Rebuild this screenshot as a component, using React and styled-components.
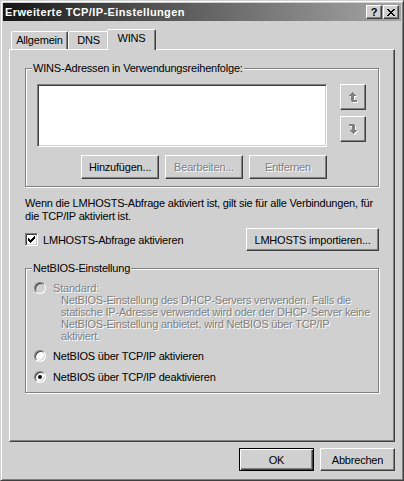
import React from 'react';
import styled, { createGlobalStyle, css } from 'styled-components';

const FACE = '#d0d0d0';
const SHADOW = '#808080';
const DARK = '#404040';

const GlobalStyle = createGlobalStyle`
  body {
    margin: 0;
    background: ${FACE};
    font-family: "Liberation Sans", Arial, sans-serif;
    font-size: 11px;
    letter-spacing: -0.2px;
    color: #000;
  }
`;

const Window = styled.div`
  box-sizing: border-box;
  width: 404px;
  height: 481px;
  background: ${FACE};
  border: 1px solid;
  border-color: ${FACE} ${DARK} ${DARK} ${FACE};
  box-shadow: inset 1px 1px #fff, inset -1px -1px ${SHADOW};
  padding: 2px;
  display: flex;
  flex-direction: column;
`;

const TitleBar = styled.div`
  height: 18px;
  display: flex;
  align-items: center;
  padding: 0 2px;
  background: linear-gradient(90deg, #141414 0%, #3a3a3a 20%, #a6a6a6 100%);
`;

const Title = styled.div`
  flex: 1;
  color: #fff;
  font-weight: bold;
  letter-spacing: 0.4px;
  white-space: nowrap;
`;

const CaptionButton = styled.div`
  box-sizing: border-box;
  width: 16px;
  height: 14px;
  margin-left: ${p => p.$gap || 0}px;
  background: ${FACE};
  border: 1px solid;
  border-color: #fff ${DARK} ${DARK} #fff;
  box-shadow: inset -1px -1px ${SHADOW};
  display: flex;
  align-items: center;
  justify-content: center;
  font-weight: bold;
  font-size: 11px;
  letter-spacing: 0;
  line-height: 12px;
`;

const Body = styled.div`
  flex: 1;
  display: flex;
  flex-direction: column;
  padding: 8px 6px 0 6px;
`;

const TabStrip = styled.div`
  height: 20px;
  display: flex;
  align-items: flex-end;
  padding-left: 2px;
`;

const Tab = styled.div`
  box-sizing: border-box;
  position: relative;
  z-index: ${p => (p.$active ? 1 : 0)};
  width: ${p => p.$w}px;
  height: ${p => (p.$active ? 21 : 18)}px;
  margin: ${p => (p.$active ? '0 -2px -1px' : '0')};
  background: ${FACE};
  border: 1px solid;
  border-bottom: none;
  border-color: #fff ${DARK} transparent #fff;
  border-radius: 2px 2px 0 0;
  box-shadow: inset -1px 0 ${SHADOW};
  line-height: 16px;
  text-align: center;
  white-space: nowrap;
`;

const Panel = styled.div`
  box-sizing: border-box;
  height: 393px;
  border: 1px solid;
  border-color: #fff ${DARK} ${DARK} #fff;
  box-shadow: inset -1px -1px ${SHADOW};
  padding: 12px 15px 0 15px;
  display: flex;
  flex-direction: column;
`;

const Group = styled.fieldset`
  margin: ${p => p.$top || 0}px 0 0 0;
  padding: 0;
  min-width: 0;
  border: 1px solid ${SHADOW};
  box-shadow: inset 1px 1px #fff, 1px 1px #fff;
`;

const Legend = styled.legend`
  margin-left: 6px;
  padding: 0 1px;
  line-height: 13px;
  background: ${FACE};
`;

const WinsBody = styled.div`
  display: flex;
  gap: 13px;
  padding: 9px 0 7px 11px;
`;

const ListColumn = styled.div`
  display: flex;
  flex-direction: column;
`;

const ListBox = styled.div`
  box-sizing: border-box;
  width: 290px;
  height: 63px;
  background: #fff;
  border: 1px solid;
  border-color: ${SHADOW} #fff #fff ${SHADOW};
  box-shadow: inset 1px 1px ${DARK}, inset -1px -1px ${FACE};
`;

const ButtonRow = styled.div`
  display: flex;
  justify-content: flex-end;
  gap: 6px;
  margin-top: 8px;
`;

const ArrowColumn = styled.div`
  display: flex;
  flex-direction: column;
  gap: 6px;
`;

const Button = styled.button`
  box-sizing: border-box;
  width: ${p => p.$w || 75}px;
  height: ${p => p.$h || 23}px;
  padding: 0;
  margin: 0;
  font-family: inherit;
  font-size: 11px;
  letter-spacing: -0.2px;
  background: ${FACE};
  color: ${p => (p.disabled ? SHADOW : '#000')};
  text-shadow: ${p => (p.disabled ? '1px 1px 0 #fff' : 'none')};
  border: 1px solid;
  border-color: #fff ${DARK} ${DARK} #fff;
  box-shadow: inset -1px -1px ${SHADOW};
  display: flex;
  align-items: center;
  justify-content: center;
  ${p =>
    p.$default &&
    css`
      border-color: #000;
      box-shadow: inset 1px 1px #fff, inset -1px -1px ${DARK}, inset -2px -2px ${SHADOW};
    `}
`;

const Note = styled.p`
  margin: 10px 0 0 0;
  line-height: 13px;
`;

const CheckRow = styled.div`
  display: flex;
  align-items: center;
  margin-top: 5px;
`;

const CheckLabel = styled.label`
  flex: 1;
  display: flex;
  align-items: center;
  gap: 5px;
`;

const CheckBox = styled.span`
  box-sizing: border-box;
  width: 13px;
  height: 13px;
  background: #fff;
  border: 1px solid;
  border-color: ${SHADOW} #fff #fff ${SHADOW};
  box-shadow: inset 1px 1px ${DARK}, inset -1px -1px ${FACE};
  display: flex;
  padding: 2px 0 0 2px;
`;

const NetBody = styled.div`
  display: flex;
  flex-direction: column;
  padding: 6px 0 9px 8px;
`;

const RadioRow = styled.label`
  display: flex;
  align-items: center;
  gap: 7px;
  height: 13px;
  margin-top: ${p => p.$top || 0}px;
  color: ${p => (p.$disabled ? SHADOW : '#000')};
  text-shadow: ${p => (p.$disabled ? '1px 1px 0 #fff' : 'none')};
`;

const Radio = styled.span`
  box-sizing: border-box;
  width: 12px;
  height: 12px;
  border-radius: 50%;
  background: ${p => (p.$disabled ? FACE : '#fff')};
  border: 1px solid;
  border-color: ${SHADOW} #fff #fff ${SHADOW};
  box-shadow: inset 1px 1px ${DARK}, inset -1px -1px ${FACE};
  display: flex;
  align-items: center;
  justify-content: center;
  flex: none;

  &::after {
    content: '';
    display: ${p => (p.$checked ? 'block' : 'none')};
    width: 4px;
    height: 4px;
    border-radius: 50%;
    background: #000;
  }
`;

const Description = styled.div`
  padding-left: 27px;
  line-height: 12px;
  color: ${SHADOW};
  text-shadow: 1px 1px 0 #fff;
`;

const Footer = styled.div`
  display: flex;
  justify-content: flex-end;
  gap: 6px;
  margin-top: 6px;
`;

const pixels = (rows, color, dx = 0, dy = 0) =>
  rows.flatMap(([y, segs]) =>
    segs.map(([x, w]) => (
      <rect key={`${color}-${y}-${x}`} x={x + dx} y={y + dy} width={w} height={1} fill={color} />
    ))
  );

const checkRows = [
  [0, [[6, 1]]],
  [1, [[5, 2]]],
  [2, [[0, 1], [4, 3]]],
  [3, [[0, 2], [3, 3]]],
  [4, [[0, 5]]],
  [5, [[1, 3]]],
  [6, [[2, 1]]],
];

const arrowRows = [
  [0, [[3, 1]]],
  [1, [[2, 3]]],
  [2, [[1, 5]]],
  [3, [[0, 7]]],
  [4, [[2, 3]]],
  [5, [[2, 3]]],
  [6, [[2, 3]]],
  [7, [[2, 3]]],
  [8, [[2, 6]]],
  [9, [[3, 5]]],
];

const closeRows = [
  [0, [[0, 2], [6, 2]]],
  [1, [[1, 2], [5, 2]]],
  [2, [[2, 4]]],
  [3, [[3, 2]]],
  [4, [[2, 4]]],
  [5, [[1, 2], [5, 2]]],
  [6, [[0, 2], [6, 2]]],
];

function CheckMark() {
  return (
    <svg width="7" height="7" viewBox="0 0 7 7" shapeRendering="crispEdges">
      {pixels(checkRows, '#000')}
    </svg>
  );
}

function CloseGlyph() {
  return (
    <svg width="8" height="7" viewBox="0 0 8 7" shapeRendering="crispEdges">
      {pixels(closeRows, '#000')}
    </svg>
  );
}

function MoveArrow({ down }) {
  return (
    <svg
      width="9"
      height="11"
      viewBox="0 0 9 11"
      shapeRendering="crispEdges"
      style={down ? { transform: 'rotate(180deg)' } : undefined}
    >
      {down ? (
        <>
          {pixels(arrowRows, '#fff', 0, 0)}
          {pixels(arrowRows, SHADOW, 1, 1)}
        </>
      ) : (
        <>
          {pixels(arrowRows, '#fff', 1, 1)}
          {pixels(arrowRows, SHADOW, 0, 0)}
        </>
      )}
    </svg>
  );
}

export default function App() {
  return (
    <>
      <GlobalStyle />
      <Window>
        <TitleBar>
          <Title>Erweiterte TCP/IP-Einstellungen</Title>
          <CaptionButton>?</CaptionButton>
          <CaptionButton $gap={1}>
            <CloseGlyph />
          </CaptionButton>
        </TitleBar>
        <Body>
          <TabStrip>
            <Tab $w={57}>Allgemein</Tab>
            <Tab $w={41}>DNS</Tab>
            <Tab $w={49} $active>
              WINS
            </Tab>
          </TabStrip>
          <Panel>
            <Group>
              <Legend>WINS-Adressen in Verwendungsreihenfolge:</Legend>
              <WinsBody>
                <ListColumn>
                  <ListBox />
                  <ButtonRow>
                    <Button $w={78} $h={24}>Hinzufügen...</Button>
                    <Button $w={78} $h={24} disabled>
                      Bearbeiten...
                    </Button>
                    <Button $w={78} $h={24} disabled>
                      Entfernen
                    </Button>
                  </ButtonRow>
                </ListColumn>
                <ArrowColumn>
                  <Button $w={26} $h={26} disabled>
                    <MoveArrow />
                  </Button>
                  <Button $w={26} $h={26} disabled>
                    <MoveArrow down />
                  </Button>
                </ArrowColumn>
              </WinsBody>
            </Group>

            <Note>
              Wenn die LMHOSTS-Abfrage aktiviert ist, gilt sie für alle Verbindungen, für
              <br />
              die TCP/IP aktiviert ist.
            </Note>

            <CheckRow>
              <CheckLabel>
                <CheckBox>
                  <CheckMark />
                </CheckBox>
                LMHOSTS-Abfrage aktivieren
              </CheckLabel>
              <Button $w={133}>LMHOSTS importieren...</Button>
            </CheckRow>

            <Group $top={11}>
              <Legend>NetBIOS-Einstellung</Legend>
              <NetBody>
                <RadioRow $disabled>
                  <Radio $disabled />
                  Standard:
                </RadioRow>
                <Description>
                  NetBIOS-Einstellung des DHCP-Servers verwenden. Falls die
                  <br />
                  statische IP-Adresse verwendet wird oder der DHCP-Server keine
                  <br />
                  NetBIOS-Einstellung anbietet, wird NetBIOS über TCP/IP
                  <br />
                  aktiviert.
                </Description>
                <RadioRow $top={7}>
                  <Radio />
                  NetBIOS über TCP/IP aktivieren
                </RadioRow>
                <RadioRow $top={8}>
                  <Radio $checked />
                  NetBIOS über TCP/IP deaktivieren
                </RadioRow>
              </NetBody>
            </Group>
          </Panel>
          <Footer>
            <Button $default>OK</Button>
            <Button>Abbrechen</Button>
          </Footer>
        </Body>
      </Window>
    </>
  );
}
